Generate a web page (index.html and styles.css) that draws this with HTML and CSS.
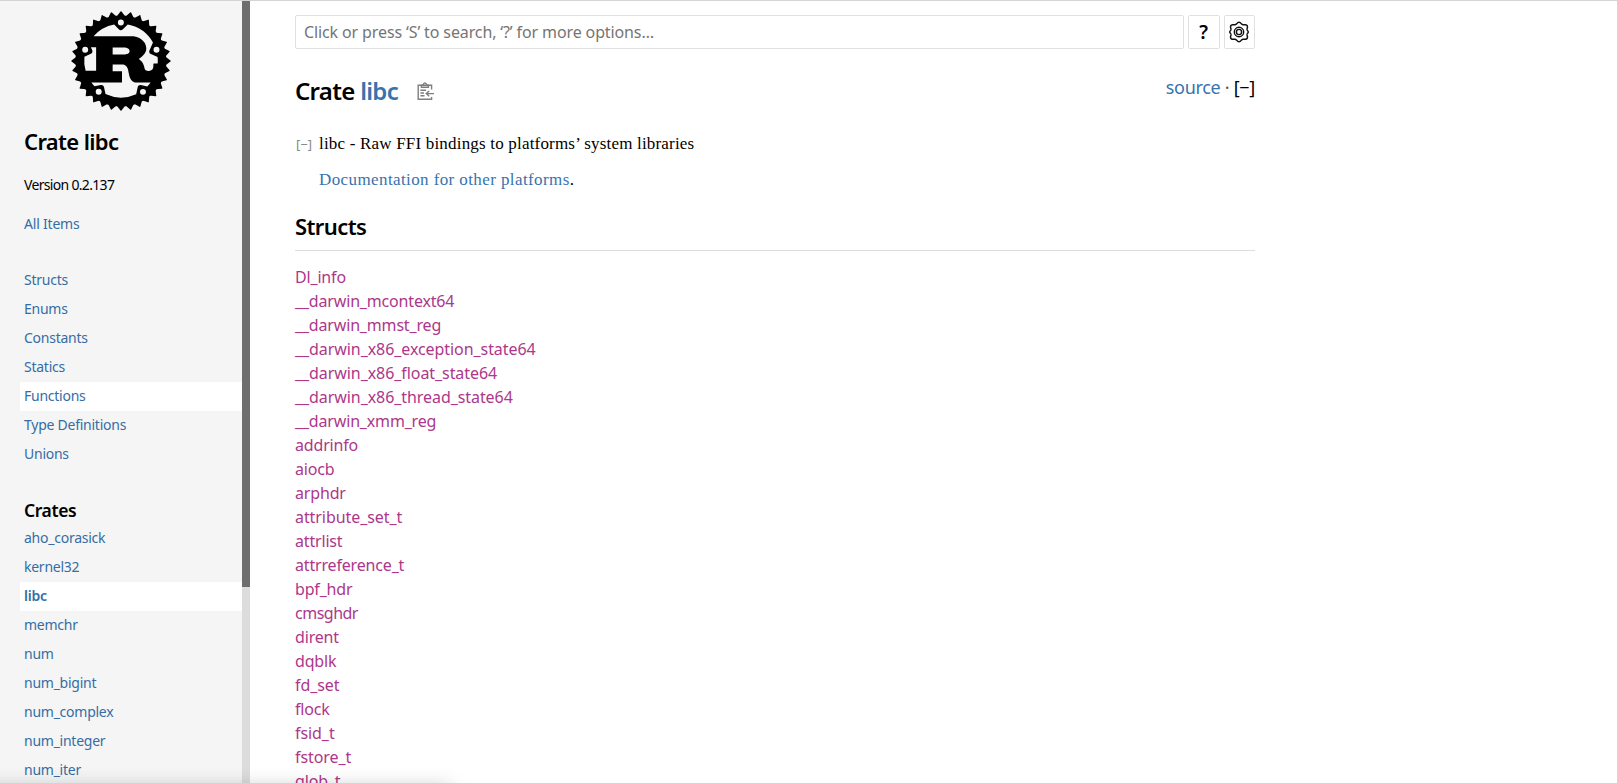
FILE: index.html
```
<!DOCTYPE html>
<html lang="en">
<head>
<meta charset="utf-8">
<title>libc - Rust</title>
<link rel="stylesheet" href="styles.css">
</head>
<body>
<div class="page">
  <nav class="sidebar">
    <div class="sidebar-content">
      <svg class="logo" viewBox="0 0 104 104" aria-label="Rust">
        <defs>
          <path id="t1" d="M-4.7-46L-.5-51.4Q0-52 .5-51.4L4.7-46Z"/>
          <g id="t2"><use href="#t1"/><use href="#t1" transform="rotate(11.25)"/></g>
          <g id="t4"><use href="#t2"/><use href="#t2" transform="rotate(22.5)"/></g>
          <g id="t8"><use href="#t4"/><use href="#t4" transform="rotate(45)"/></g>
          <g id="t16"><use href="#t8"/><use href="#t8" transform="rotate(90)"/></g>
        </defs>
        <g transform="translate(52 52)"><use href="#t16"/><use href="#t16" transform="rotate(180)"/></g>
        <path transform="translate(-19.05 -18.95)" fill-rule="evenodd" d="m71.05 23.68c-26.06 0-47.27 21.22-47.27 47.27s21.22 47.27 47.27 47.27 47.27-21.22 47.27-47.27-21.22-47.27-47.27-47.27zm-.07 4.2a3.1 3.11 0 0 1 3.02 3.11 3.11 3.11 0 0 1 -6.22 0 3.11 3.11 0 0 1 3.2-3.11zm7.12 5.12a38.27 38.27 0 0 1 26.2 18.66l-3.67 8.28c-.63 1.43.02 3.11 1.44 3.75l7.06 3.13a38.27 38.27 0 0 1 .08 6.64h-3.93c-.39 0-.55.26-.55.64v1.8c0 4.24-2.39 5.17-4.49 5.4-2 .23-4.21-.84-4.49-2.06-1.18-6.63-3.14-8.04-6.24-10.49 3.85-2.44 7.85-6.05 7.85-10.87 0-5.21-3.57-8.49-6-10.1-3.42-2.25-7.2-2.7-8.22-2.7h-40.6a38.27 38.27 0 0 1 21.41-12.08l4.79 5.02c1.08 1.13 2.87 1.18 4 .09zm-44.2 23.02a3.11 3.11 0 0 1 3.02 3.11 3.11 3.11 0 0 1 -6.22 0 3.11 3.11 0 0 1 3.2-3.11zm74.15.14a3.11 3.11 0 0 1 3.02 3.11 3.11 3.11 0 0 1 -6.22 0 3.11 3.11 0 0 1 3.2-3.11zm-68.29.5h5.42v24.44h-10.94a38.27 38.27 0 0 1 -1.24-14.61l6.7-2.98c1.43-.64 2.08-2.31 1.44-3.74zm22.62.26h12.91c.67 0 4.71.77 4.71 3.8 0 2.51-3.1 3.41-5.65 3.41h-11.98zm0 17.56h9.89c.9 0 4.83.26 6.08 5.28.39 1.54 1.26 6.56 1.85 8.17.59 1.8 2.98 5.4 5.53 5.4h16.14a38.27 38.27 0 0 1 -3.54 4.1l-6.57-1.41c-1.53-.33-3.04.65-3.37 2.18l-1.56 7.28a38.27 38.27 0 0 1 -31.91-.15l-1.56-7.28c-.33-1.53-1.83-2.51-3.36-2.18l-6.43 1.38a38.27 38.27 0 0 1 -3.32-3.92h31.27c.35 0 .59-.06.59-.39v-11.06c0-.32-.24-.39-.59-.39h-9.15zm-14.43 25.33a3.11 3.11 0 0 1 3.02 3.11 3.11 3.11 0 0 1 -6.22 0 3.11 3.11 0 0 1 3.2-3.11zm46.05.14a3.11 3.11 0 0 1 3.02 3.11 3.11 3.11 0 0 1 -6.22 0 3.11 3.11 0 0 1 3.2-3.11z"/>
      </svg>
      <h2 class="crate-name">Crate libc</h2>
      <p class="version">Version 0.2.137</p>
      <a class="all-items">All Items</a>
      <ul class="side-list sections">
        <li>Structs</li><li>Enums</li><li>Constants</li><li>Statics</li><li class="active">Functions</li><li>Type Definitions</li><li>Unions</li>
      </ul>
      <h3 class="crates-title">Crates</h3>
      <ul class="side-list crates">
        <li>aho_corasick</li><li>kernel32</li><li class="active current">libc</li><li>memchr</li><li>num</li><li>num_bigint</li><li>num_complex</li><li>num_integer</li><li>num_iter</li>
      </ul>
    </div>
    <div class="track"><div class="thumb"></div></div>
  </nav>
  <main class="main">
    <form class="search">
      <div class="search-input">Click or press ‘S’ to search, ‘?’ for more options…</div>
      <div class="button help">?</div>
      <div class="button">
        <svg class="gear" viewBox="0 0 22 22"><path d="M11 1.2Q12.3 1.2 13.4 2.8Q14.2 3.8 15.4 3.7L17.6 3.7Q19.6 4.1 19.5 6.3L19 8Q18.8 9 19.6 9.8Q21 11 19.6 12.2Q18.8 13 19 14L19.5 15.7Q19.6 17.9 17.6 18.3L15.4 18.3Q14.2 18.2 13.4 19.2Q12.3 20.8 11 20.8Q9.7 20.8 8.6 19.2Q7.8 18.2 6.6 18.3L4.4 18.3Q2.4 17.9 2.5 15.7L3 14Q3.2 13 2.4 12.2Q1 11 2.4 9.8Q3.2 9 3 8L2.5 6.3Q2.4 4.1 4.4 3.7L6.6 3.7Q7.8 3.8 8.6 2.8Q9.7 1.2 11 1.2Z"/><circle cx="11" cy="11" r="4.7"/><circle cx="11" cy="11" r="2.6"/></svg>
      </div>
    </form>
    <header class="heading">
      <h1>Crate <span class="link">libc</span></h1>
      <svg class="clipboard" viewBox="0 0 18 19"><path d="M14.6 7.5V3.2H1.2V17.3H14.6V15M4.4 5.2V2.9H6.2Q6.4 1 7.9 1T9.6 2.9H11.4V5.2ZM3.4 8.2H9M3.4 11H7M3.4 13.8H7.5M17 11.6H9.5M12.2 9L9.3 11.6L12.2 14.2"/></svg>
      <div class="out"><span class="link">source</span> · <span class="toggle">[−]</span></div>
    </header>
    <section class="doc">
      <span class="doc-toggle">[−]</span>
      <div class="doc-text">
        <p class="lead">libc - Raw FFI bindings to platforms’ system libraries</p>
        <p class="other"><span class="link">Documentation for other platforms</span>.</p>
      </div>
    </section>
    <h2 class="section-title">Structs</h2>
    <ul class="items">
      <li>Dl_info</li><li>__darwin_mcontext64</li><li>__darwin_mmst_reg</li><li class="long">__darwin_x86_exception_state64</li><li class="long">__darwin_x86_float_state64</li><li class="long">__darwin_x86_thread_state64</li><li>__darwin_xmm_reg</li><li>addrinfo</li><li>aiocb</li><li>arphdr</li><li class="long">attribute_set_t</li><li>attrlist</li><li>attrreference_t</li><li>bpf_hdr</li><li class="tight">cmsghdr</li><li>dirent</li><li>dqblk</li><li class="long">fd_set</li><li>flock</li><li class="long">fsid_t</li><li class="long">fstore_t</li><li>glob_t</li>
    </ul>
  </main>
</div>
<div class="status-shadow"></div>
</body>
</html>
```
FILE: styles.css
```
* { box-sizing: border-box; margin: 0; padding: 0; }
body { height: 783px; overflow: hidden; background: #fff; color: #000; font-family: "Noto Sans", sans-serif; font-size: 16px; }
.page { display: flex; height: 783px; border-top: 1px solid #d4d4d4; }
ul { list-style: none; }
.link { color: #3873ad; }

.sidebar { display: flex; width: 250px; background: #f5f5f5; overflow: hidden; }
.sidebar-content { width: 242px; padding-left: 20px; color: #356da4; font-size: 14px; }
.logo { display: block; width: 100px; height: 100px; margin: 10px 0 0 51px; }
.crate-name { margin: 13px 0 0 4px; color: #000; font-size: 22px; font-weight: 600; line-height: 34px; letter-spacing: -.65px; }
.version { margin: 17px 0 0 4px; color: #000; line-height: 20px; letter-spacing: -.68px; }
.all-items { display: block; margin: 19px 0 0 4px; line-height: 20px; letter-spacing: -.2px; }
.side-list li { height: 29px; padding-left: 4px; line-height: 28px; font-weight: 450; letter-spacing: -.25px; }
.side-list .active { background: #fff; }
.side-list .current { font-weight: 600; }
.sections { margin-top: 32px; }
.crates-title { margin: 27px 0 0 4px; color: #000; font-size: 17.5px; font-weight: 600; line-height: 28px; letter-spacing: -.4px; }
.track { width: 8px; background: #dcdcdc; }
.thumb { height: 586px; background: #6e6e6e; }

.main { width: 960px; margin-left: 45px; padding-top: 14px; }
.search { display: flex; gap: 4px; height: 34px; }
.search-input { flex: 1; padding-left: 8px; border: 1px solid #e0e0e0; border-radius: 2px; color: #757575; line-height: 32px; letter-spacing: -.12px; }
.button { display: flex; align-items: center; justify-content: center; width: 31.5px; border: 1px solid #e0e0e0; border-radius: 2px; }
.help { font-size: 19px; font-weight: 600; }
.gear { flex: none; width: 22px; height: 22px; fill: none; stroke: #111; stroke-width: 1.4; }
.heading { display: flex; height: 46px; margin-top: 19px; }
h1 { font-size: 24px; font-weight: 600; line-height: 46px; letter-spacing: -.7px; }
.clipboard { width: 18px; height: 19px; margin: 14px 0 0 19px; fill: none; stroke: #7f7f7f; stroke-width: 1.4; }
.out { margin-left: auto; font-size: 18px; line-height: 38px; color: #555; letter-spacing: -.3px; }
.toggle { color: #000; }
.doc { display: flex; margin-top: 16px; font-family: "Liberation Serif", serif; }
.doc-toggle { width: 24px; padding-left: 1px; color: #888; font: 13px/29px "Noto Sans", sans-serif; }
.doc-text { font-size: 17px; line-height: 28px; }
.lead { letter-spacing: .19px; }
.other { margin-top: 8px; letter-spacing: .4px; }
.section-title { height: 43px; margin-top: 14px; border-bottom: 1px solid #ddd; font-size: 22px; font-weight: 600; line-height: 36px; letter-spacing: -.6px; }
.items { margin-top: 14px; color: #ad378a; font-size: 16px; line-height: 24px; letter-spacing: -.17px; }
.items .long { letter-spacing: -.07px; }
.items .tight { letter-spacing: -.5px; }
.status-shadow { position: absolute; left: -20px; top: 788px; width: 470px; height: 20px; box-shadow: 0 0 20px rgba(0, 0, 0, .25); }
```
